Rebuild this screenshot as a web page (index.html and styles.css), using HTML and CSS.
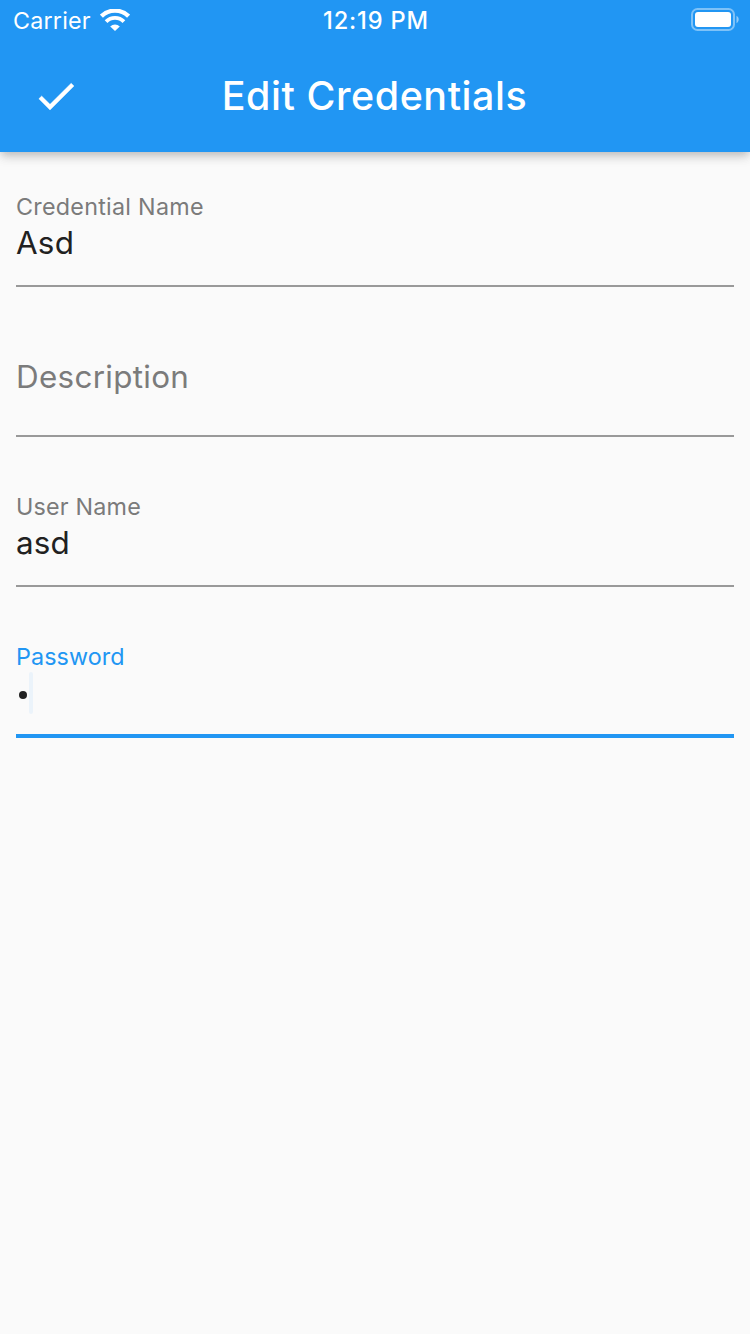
FILE: index.html
```html
<!DOCTYPE html>
<html lang="en">
<head>
<meta charset="utf-8">
<title>Edit Credentials</title>
<link rel="stylesheet" href="styles.css">
</head>
<body>
<header class="app-bar">
  <div class="status-bar">
    <div class="carrier">
      <span class="carrier-name">Carrier</span>
      <svg class="wifi" width="30" height="22" viewBox="0 0 30 22" fill="none" stroke="#fff">
        <path d="M1.4 7.2A19.5 19.5 0 0 1 28.6 7.2" stroke-width="4.4"/>
        <path d="M6.1 12.6A12.6 12.6 0 0 1 23.9 12.6" stroke-width="3.9"/>
        <path d="M10.2 17.4A7 7 0 0 1 19.8 17.4L15 22Z" fill="#fff" stroke="none"/>
      </svg>
    </div>
    <span class="clock">12:19 PM</span>
    <svg class="battery" width="48" height="24" viewBox="0 0 48 24">
      <rect x="1" y="1" width="42" height="21" rx="5.5" fill="none" stroke="#fff" stroke-opacity=".42" stroke-width="2"/>
      <rect x="4" y="4" width="36" height="15" rx="3" fill="#fff"/>
      <path d="M45.5 7.8C48.4 9.4 48.4 13.6 45.5 15.2Z" fill="#fff" fill-opacity=".5"/>
    </svg>
  </div>
  <div class="toolbar">
    <svg class="check" width="48" height="48" viewBox="0 0 24 24" fill="#fff" stroke="#fff" stroke-width=".2"><path d="M9 16.17 4.83 12l-1.42 1.41L9 19 21 7l-1.41-1.41z"/></svg>
    <h1 class="title">Edit Credentials</h1>
  </div>
</header>
<main class="form">
  <div class="field">
    <span class="label label-name">Credential Name</span>
    <span class="value">Asd</span>
  </div>
  <div class="field">
    <span class="placeholder">Description</span>
  </div>
  <div class="field">
    <span class="label label-user">User Name</span>
    <span class="value">asd</span>
  </div>
  <div class="field field-focused">
    <span class="label label-password">Password</span>
    <span class="password"><span class="dot"></span><span class="cursor"></span></span>
  </div>
</main>
</body>
</html>
```
FILE: styles.css
```css
* { box-sizing: border-box; }
body {
  margin: 0;
  min-height: 1334px;
  background: #fafafa;
  font-family: Inter, "Liberation Sans", sans-serif;
}
.app-bar {
  height: 152px;
  background: #2196f3;
  color: #fff;
  box-shadow: 0 4px 8px -2px rgba(0, 0, 0, .14), 0 8px 10px rgba(0, 0, 0, .05), 0 2px 12px rgba(0, 0, 0, .12);
}
.status-bar {
  display: grid;
  grid-template-columns: 1fr auto 1fr;
  height: 40px;
  padding: 0 11px 0 13px;
}
.carrier { display: flex; align-items: flex-start; gap: 10px; }
.carrier-name { width: 77px; font-size: 23.3px; line-height: 42px; letter-spacing: .2px; white-space: nowrap; }
.wifi { margin-top: 9px; }
.clock { font-size: 23.6px; font-weight: 500; line-height: 42px; letter-spacing: .85px; white-space: nowrap; }
.battery { justify-self: end; margin-top: 8px; }
.toolbar {
  display: grid;
  grid-template-columns: 80px 1fr 80px;
  align-items: center;
  height: 112px;
  padding: 0 32px;
}
.title { margin: 0 0 1px -1px; font-size: 39.4px; font-weight: 500; line-height: 48px; letter-spacing: .58px; text-align: center; white-space: nowrap; }
.form { display: flex; flex-direction: column; gap: 50px; padding: 35px 16px 0; }
.field {
  display: flex;
  flex-direction: column;
  height: 100px;
  border-bottom: 2px solid #999;
  color: #212121;
}
.field-focused { height: 101px; border-bottom: 4px solid #2196f3; }
.label { align-self: flex-start; font-size: 23.3px; line-height: 40px; letter-spacing: .27px; color: #7b7b7b; white-space: nowrap; }
.value { align-self: flex-start; font-size: 31.4px; line-height: 32px; letter-spacing: .2px; }
.placeholder { align-self: flex-start; padding-top: 20px; font-size: 31.4px; line-height: 40px; letter-spacing: .3px; color: #7b7b7b; }
.label-user { letter-spacing: .2px; }
.label-password { letter-spacing: .1px; color: #2196f3; }
.password { display: flex; align-items: center; height: 42px; margin-top: -5px; padding-left: 3px; }
.dot { width: 8px; height: 8px; margin-top: 4px; border-radius: 50%; background: #212121; }
.cursor { width: 4px; height: 42px; margin-left: 2px; border-radius: 2px; background: #ebf3fa; }
```
